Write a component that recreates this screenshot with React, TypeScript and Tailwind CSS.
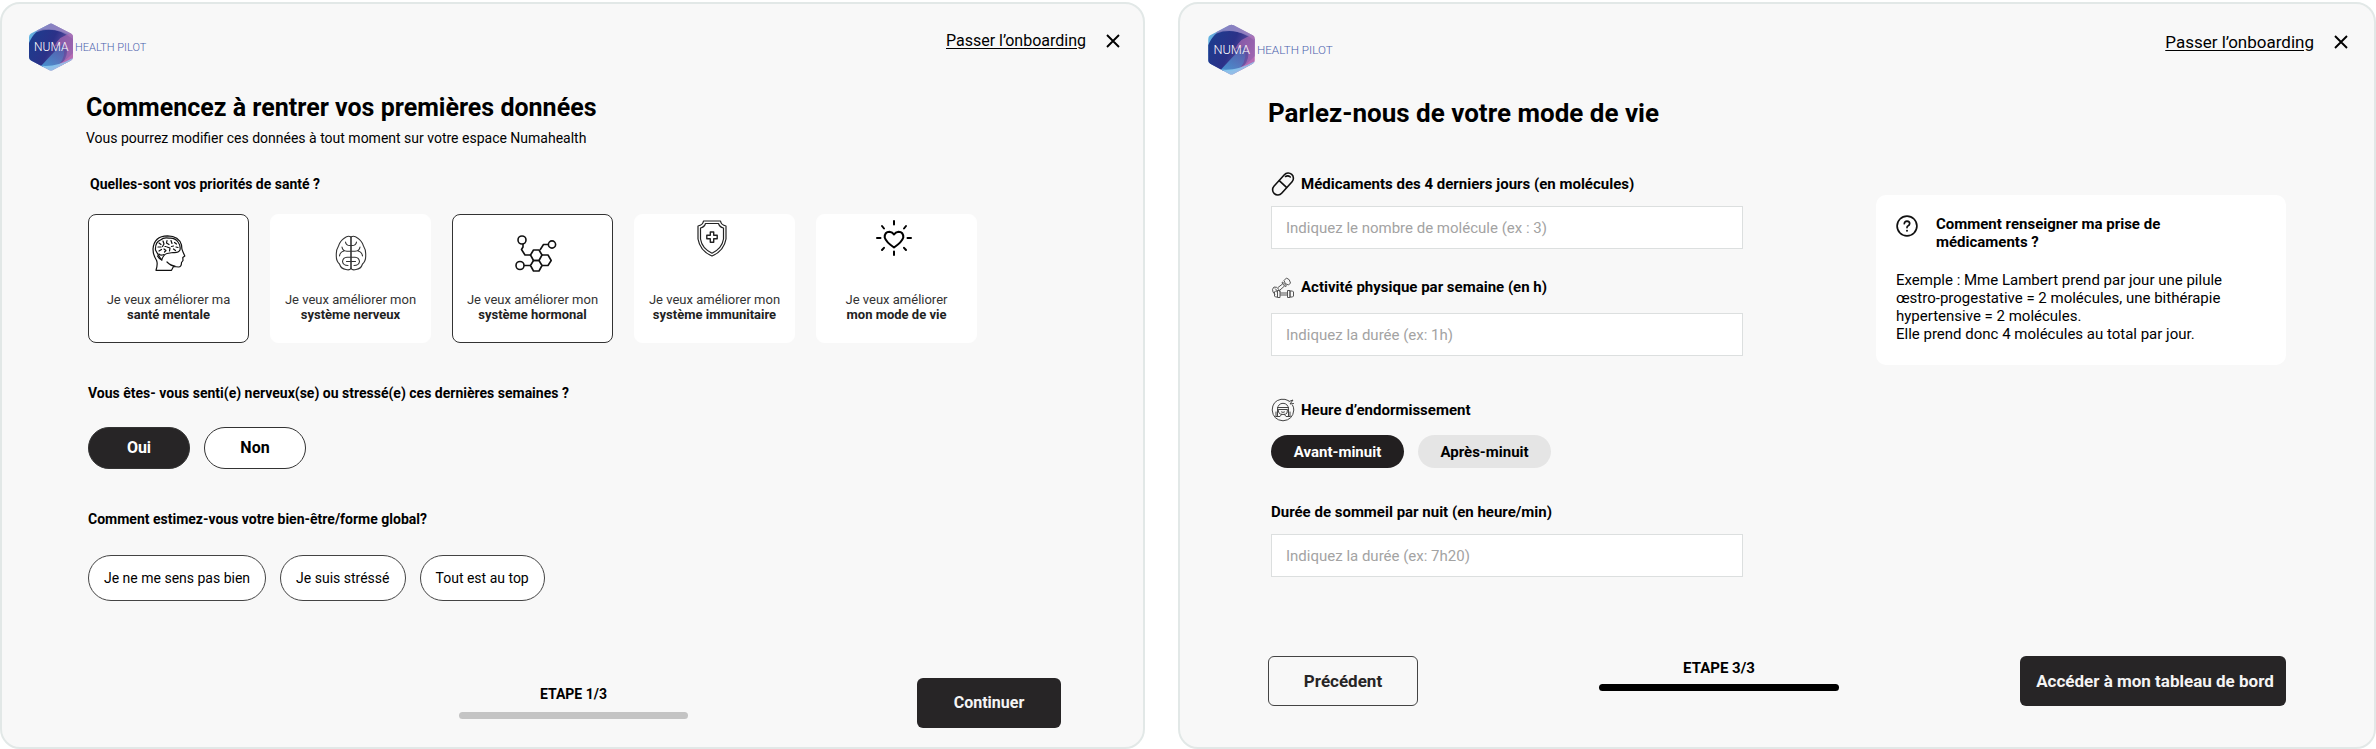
import { useId, useState } from "react";
import type { ReactNode } from "react";

interface Priority {
  id: string;
  intro: string;
  name: string;
  icon: ReactNode;
  raised?: boolean;
}

const PRIORITIES: Priority[] = [
  { id: "mental", intro: "Je veux améliorer ma", name: "santé mentale", icon: <HeadIcon /> },
  { id: "nerveux", intro: "Je veux améliorer mon", name: "système nerveux", icon: <BrainIcon /> },
  { id: "hormonal", intro: "Je veux améliorer mon", name: "système hormonal", icon: <MoleculeIcon /> },
  { id: "immunitaire", intro: "Je veux améliorer mon", name: "système immunitaire", icon: <ShieldIcon />, raised: true },
  { id: "mode", intro: "Je veux améliorer", name: "mon mode de vie", icon: <HeartIcon />, raised: true },
];

const FEELINGS = ["Je ne me sens pas bien", "Je suis stréssé", "Tout est au top"];

function Logo({ className }: { className: string }) {
  const id = useId();
  return (
    <svg viewBox="0 0 125 48" className={className} role="img" aria-label="Numa Health Pilot">
      <defs>
        <linearGradient id={`${id}a`} x1="0" y1="0" x2="1" y2="0.3">
          <stop offset="0" stopColor="#5fc0ea" />
          <stop offset="0.45" stopColor="#6f7fc0" />
          <stop offset="1" stopColor="#c06fb6" />
        </linearGradient>
        <linearGradient id={`${id}b`} x1="0" y1="0.2" x2="1" y2="0.6">
          <stop offset="0" stopColor="#1c3d8f" />
          <stop offset="0.5" stopColor="#2b3188" />
          <stop offset="1" stopColor="#7a5cab" />
        </linearGradient>
        <linearGradient id={`${id}c`} x1="0" y1="1" x2="1" y2="0">
          <stop offset="0" stopColor="#4db4e8" />
          <stop offset="1" stopColor="#5a55a8" />
        </linearGradient>
        <clipPath id={`${id}d`}>
          <path d="M20 1.2Q22 0 24 1.2L42 10.5Q44 11.6 44 14V34Q44 36.4 42 37.5L24 47Q22 48 20 47L2 37.5Q0 36.4 0 34V14Q0 11.6 2 10.5Z" />
        </clipPath>
      </defs>
      <g clipPath={`url(#${id}d)`}>
        <rect width="44" height="48" fill={`url(#${id}a)`} />
        <path d="M0 20Q6 6 16 6Q32 6 44 14V30Q30 46 10 44L0 38Z" fill={`url(#${id}b)`} />
        <path d="M8 9Q26 2 44 16V0H8Z" fill="#8f83c2" opacity="0.75" />
        <path d="M44 10Q30 12 25 24Q34 20 38 28Q38 36 30 44L44 40Z" fill="#b06bb4" opacity="0.65" />
        <path d="M12 43Q22 32 34 20Q38 32 30 42Q20 46 12 43Z" fill={`url(#${id}c)`} opacity="0.75" />
        <path d="M8 42Q24 46 44 35V48H8Z" fill="#8fd0f2" opacity="0.8" />
      </g>
      <text x="5" y="28" fontSize="12" fontWeight="300" fill="#fff" className="font-[Roboto,sans-serif]">NUMA</text>
      <text x="46" y="28" fontSize="11" fontWeight="300" fill="#4a61ad" className="font-[Roboto,sans-serif]">HEALTH PILOT</text>
    </svg>
  );
}

function HeadIcon() {
  return (
    <svg viewBox="0 0 34 36" className="h-9 w-[34px]" fill="none" stroke="#111" strokeWidth="1.2" strokeLinecap="round" strokeLinejoin="round" aria-hidden>
      <path d="M4 35.3Q6 29 4.6 25.5Q1 20 1 14Q2 1 15.500 .8Q27 1 29.500 10Q29.500 14 31 17L32.800 21L30.800 22.500L31 25.500L29.500 27.500Q29.500 32 26.500 32L21.500 31.500L19.500 35.300Z" />
      <path d="M28 15Q26.500 18 21 17.500L15 18.500Q12 19 9.500 25Q5 18 3.500 15Q3 7 8.500 5Q12 1.800 17 3.200Q23 2.600 26 7Q28.800 10.500 28 15Z" />
      <path d="M10 25Q7 24 5.500 21M12 19.500Q8 21 7 19M15 27Q19 31 23 31" />
      <path d="M7 8L9 9.500M6 12H9M7 16L9.500 14.500M11 6L12 9L10.500 11.500M12 14L14 15.500L12.500 17M15 5.500L14.500 8L17 9.500M15 12L18 13L17.500 16M19 5.500L20 8.500M21.500 11L19.500 11.500M22.500 7.500L24.500 9M24 12L26 12.500M21.500 14L23.500 15.500M13 11.500H14" />
    </svg>
  );
}

function BrainIcon() {
  return (
    <svg viewBox="0 0 32 36" className="h-9 w-8" fill="none" stroke="#333" strokeWidth="1.1" strokeLinecap="round" aria-hidden>
      <path d="M16 2Q13 0 9.500 3Q5 6 3.500 11Q1 15 1.300 20Q1 26 4.500 29Q6 34 11 34.500Q14.500 35.500 16 33.500Q17.500 35.500 21 34.500Q26 34 27.500 29Q31 26 30.700 20Q31 15 28.500 11Q27 6 22.500 3Q19 0 16 2Z" />
      <path d="M16 2V33.500" strokeWidth="1.6" />
      <path d="M10.500 7Q11 11 16 10.500Q21 11 21.500 7M7 12Q7.500 16 12 16.300H20Q24.500 16 25 12M4.500 21Q5 17 9 16M27.500 21Q27 17 23 16" />
      <path d="M13 30.500Q8 30.500 7.500 26.500Q8 22.500 12 22.300H20Q24 22.500 24.500 26.500Q24 30.500 19 30.500M11.500 26.500H20.500" />
    </svg>
  );
}

function MoleculeIcon() {
  return (
    <svg viewBox="-6 0 48 37" className="h-[37px] w-12" fill="none" stroke="#111" strokeWidth="1.6" strokeLinejoin="round" aria-hidden>
      <circle cx="7" cy="5" r="4" />
      <circle cx="5" cy="30.500" r="4" />
      <circle cx="37" cy="9.500" r="3.600" />
      <path d="M8 9V12L6.500 14.500L10 20H15.500M9 30.500H15.500M33.500 9.500H28.500L25 15" />
      <path d="M18.500 15H24L27 20L24 25.500H18.500L15.500 20Z" />
      <path d="M18.500 25.500H24L27 30.500L24 36H18.500L15.500 30.500Z" />
      <path d="M27 20H33L36.200 25.500L33 30.500H27" />
    </svg>
  );
}

function ShieldIcon() {
  return (
    <svg viewBox="0 0 36 37" className="h-[37px] w-9" fill="none" stroke="#222" strokeWidth="1.2" strokeLinejoin="round" aria-hidden>
      <path d="M6.500 1H23.500Q24 5 29 6V19Q27 31 15 36Q3 31 1 19V6Q6 5 6.500 1Z" />
      <path d="M8.500 3.500H21.500Q22.500 7 26.500 8V19Q25 28.500 15 33.200Q5 28.500 3.500 19V8Q7.500 7 8.500 3.500Z" />
      <path d="M13.300 12H16.700V15.300H20.200V18.700H16.700V22.200H13.300V18.700H9.800V15.300H13.300Z" strokeWidth="1.400" />
    </svg>
  );
}

function HeartIcon() {
  return (
    <svg viewBox="0 0 42 36" className="h-9 w-[42px]" fill="none" stroke="#000" strokeWidth="2" strokeLinecap="round" strokeLinejoin="round" aria-hidden>
      <path d="M18 27.500Q10 22 8.700 17.500Q8.500 12 13.500 11.800Q16.500 12 18 14.500Q19.500 12 22.500 11.800Q27.500 12 27.300 17.500Q26 22 18 27.500Z" />
      <path d="M18 1V4.500M18 31.500V35M1 18H4.500M31.500 18H35M6 6L8 8.500M30 6L28 8.500M6 30L8 27.800M30 30L28 27.800" />
    </svg>
  );
}

function CapsuleIcon() {
  return (
    <svg viewBox="0 0 24 24" className="size-6" fill="none" stroke="#111" strokeWidth="1.600" strokeLinecap="round" aria-hidden>
      <rect x="-1" y="6.800" width="26" height="10.400" rx="5.200" transform="rotate(-48 12 12)" />
      <path d="M8.500 8.800L15.500 15.300M14.500 4.500Q17 3 19.300 5" />
    </svg>
  );
}

function DumbbellIcon() {
  return (
    <svg viewBox="0 0 24 24" className="size-6" fill="none" stroke="#555" strokeWidth="1" strokeLinejoin="round" aria-hidden>
      <path d="M13 5.500L15.500 3Q19 4 19.500 8L17.500 10Q13.500 9.500 13 5.500ZM11.500 7L15.500 10.800L14 11.500L11 8ZM11.500 9L7 12.500M13.500 11L9 15M3 12Q6 11.500 8 14.500L9 17M3 12Q.5 14 2 17L4 19.500M4 13.500Q6.500 15 6.500 18" />
      <path d="M4.500 16H6.500V22H4.500L3.500 21V17ZM6.500 15.500H9V22.500H6.500ZM9 18H16.500M9 20H16.500M16.500 15.500H19V22.500H16.500ZM19 16H21.500L22.500 17V21L21.500 22H19Z" />
    </svg>
  );
}

function SleepIcon() {
  return (
    <svg viewBox="0 0 24 24" className="size-6" fill="none" stroke="#444" strokeWidth="1" strokeLinecap="round" strokeLinejoin="round" aria-hidden>
      <path d="M17.500 2.600Q14 .7 10 1.300Q1.500 3 1.200 12Q2 22 12 22.800Q22 22 22.800 12Q22.800 9 21.500 7" />
      <path d="M18 3.500L22 2L19 6L22.500 5.500" />
      <path d="M6.500 18V11Q7 5.500 12 5.300Q17 5.500 17.500 11V18M6.500 9.500H17.500M7.500 11.500H16.500L16 15Q15 16.500 12 16.500Q9 16.500 8 15ZM5 18.500H9L10.500 16.500M19 18.500H15L13.500 16.500M10.500 14Q12 15 13.500 14M5 14V18.500M19 14V18.500" />
    </svg>
  );
}

function HelpIcon() {
  return (
    <svg viewBox="0 0 22 22" className="size-[22px] shrink-0" fill="none" stroke="#111" strokeWidth="1.700" strokeLinecap="round" aria-hidden>
      <circle cx="11" cy="11" r="9.900" />
      <path d="M8.300 8.700Q8.500 6.300 11 6.200Q13.700 6.400 13.700 8.700Q13.500 10.200 12.200 10.700Q11 11.300 11 12.600" />
      <path d="M11 15.700V15.800" strokeWidth="2" />
    </svg>
  );
}

function TopBar({ className, logoClassName, linkClassName }: { className: string; logoClassName: string; linkClassName: string }) {
  return (
    <header className={`flex items-start justify-between ${className}`}>
      <Logo className={logoClassName} />
      <div className="flex items-center gap-5 pt-1.5">
        <a href="#passer" className={`leading-6 underline underline-offset-2 ${linkClassName}`}>
          Passer l’onboarding
        </a>
        <button type="button" aria-label="Fermer">
          <svg viewBox="0 0 14 14" className="size-3.5" fill="none" stroke="#000" strokeWidth="1.900" aria-hidden>
            <path d="M1 1L13 13M13 1L1 13" />
          </svg>
        </button>
      </div>
    </header>
  );
}

function StepProgress({ label, className, barClassName }: { label: string; className: string; barClassName: string }) {
  return (
    <div className={`flex flex-col items-center leading-5 font-bold ${className}`}>
      <span>{label}</span>
      <div className={`h-[7px] rounded-sm ${barClassName}`} />
    </div>
  );
}

function Field({ label, placeholder, icon, className }: { label: string; placeholder: string; icon?: ReactNode; className: string }) {
  const id = useId();
  return (
    <div className={`flex flex-col ${className}`}>
      <label htmlFor={id} className="flex h-6 items-center gap-1.5 font-bold">
        {icon}
        {label}
      </label>
      <input
        id={id}
        type="text"
        placeholder={placeholder}
        className="h-[43px] w-full border border-[#dcdfdf] bg-white px-3.5 placeholder:text-[#a3a3a3]"
      />
    </div>
  );
}

function PrioritiesStep() {
  const [selected, setSelected] = useState<string[]>(["mental", "hormonal"]);
  const [stressed, setStressed] = useState(true);
  const [feeling, setFeeling] = useState("");

  const toggle = (id: string) => {
    setSelected((prev) => (prev.includes(id) ? prev.filter((p) => p !== id) : [...prev, id]));
  };

  return (
    <section className="flex flex-col rounded-[20px] border-2 border-[#e2e8e7] bg-[#f8f8f8] text-sm leading-5">
      <TopBar className="pt-[19px] pr-[23px] pl-[27px]" logoClassName="h-12 w-[125px]" linkClassName="text-base" />

      <main className="mt-[21px] flex flex-col px-[84px]">
        <h1 className="text-[25px] leading-8 font-bold">Commencez à rentrer vos premières données</h1>
        <p className="mt-1">Vous pourrez modifier ces données à tout moment sur votre espace Numahealth</p>

        <div className="mt-[26px] flex flex-col gap-10 pl-0.5">
          <div>
            <h2 className="pl-0.5 font-bold">Quelles-sont vos priorités de santé ?</h2>
            <div className="mt-5 flex gap-[21px]">
              {PRIORITIES.map((p) => (
                <button
                  key={p.id}
                  type="button"
                  aria-pressed={selected.includes(p.id)}
                  onClick={() => toggle(p.id)}
                  className={`flex h-[129px] w-[161px] flex-col items-center justify-between rounded-lg border bg-white pb-5 text-[13px] leading-[15px] text-[#333] ${
                    p.raised ? "pt-[5px]" : "pt-5"
                  } ${selected.includes(p.id) ? "border-[#333]" : "border-white"}`}
                >
                  {p.icon}
                  <span>
                    {p.intro}
                    <br />
                    <strong className="font-bold text-[#222]">{p.name}</strong>
                  </span>
                </button>
              ))}
            </div>
          </div>

          <div>
            <h2 className="font-bold">Vous êtes- vous senti(e) nerveux(se) ou stressé(e) ces dernières semaines ?</h2>
            <div className="mt-6 flex gap-3.5 text-base font-bold">
              {[true, false].map((value) => (
                <button
                  key={String(value)}
                  type="button"
                  aria-pressed={stressed === value}
                  onClick={() => setStressed(value)}
                  className={`h-[42px] w-[102px] rounded-full border border-[#333] ${
                    stressed === value ? "bg-[#272526] text-white" : "bg-white"
                  }`}
                >
                  {value ? "Oui" : "Non"}
                </button>
              ))}
            </div>
          </div>

          <div>
            <h2 className="font-bold">Comment estimez-vous votre bien-être/forme global?</h2>
            <div className="mt-[26px] flex gap-3.5">
              {FEELINGS.map((f) => (
                <button
                  key={f}
                  type="button"
                  aria-pressed={feeling === f}
                  onClick={() => setFeeling(f)}
                  className="h-[46px] rounded-full border border-[#444] bg-white px-[15px] aria-pressed:bg-[#272526] aria-pressed:text-white"
                >
                  {f}
                </button>
              ))}
            </div>
          </div>
        </div>
      </main>

      <footer className="mt-auto flex justify-between pr-[82px] pb-[19px] pl-[84px]">
        <div className="w-36" />
        <StepProgress label="ETAPE 1/3" className="gap-2 pt-1.5" barClassName="w-[229px] bg-[#c4c4c4]" />
        <button type="button" className="h-[50px] w-36 rounded-md bg-[#272526] text-base font-bold text-[#f4f4f4]">
          Continuer
        </button>
      </footer>
    </section>
  );
}

function LifestyleStep() {
  const [bedtime, setBedtime] = useState("Avant-minuit");

  return (
    <section className="flex flex-col rounded-[20px] border-2 border-[#e2e8e7] bg-[#f8f8f8] text-[15px] leading-5">
      <TopBar className="pt-5 pr-[26px] pl-7" logoClassName="h-[51px] w-[133px]" linkClassName="text-[17px]" />

      <main className="mt-[22px] px-[88px]">
        <h1 className="text-[26px] leading-8 font-bold">Parlez-nous de votre mode de vie</h1>

        <div className="mt-[43px] flex items-start justify-between pl-[3px]">
          <form className="flex w-[472px] flex-col">
            <Field
              label="Médicaments des 4 derniers jours (en molécules)"
              placeholder="Indiquez le nombre de molécule (ex : 3)"
              icon={<CapsuleIcon />}
              className="gap-2.5"
            />
            <Field
              label="Activité physique par semaine (en h)"
              placeholder="Indiquez la durée (ex: 1h)"
              icon={<DumbbellIcon />}
              className="mt-[26px] gap-3.5"
            />
            <fieldset className="mt-[42px]">
              <legend className="flex h-6 items-center gap-1.5 font-bold">
                <SleepIcon />
                Heure d’endormissement
              </legend>
              <div className="mt-[13px] flex gap-3.5">
                {["Avant-minuit", "Après-minuit"].map((b) => (
                  <button
                    key={b}
                    type="button"
                    aria-pressed={bedtime === b}
                    onClick={() => setBedtime(b)}
                    className={`h-[33px] w-[133px] rounded-full font-bold ${
                      bedtime === b ? "bg-[#221f20] text-white" : "bg-[#e5e5e5]"
                    }`}
                  >
                    {b}
                  </button>
                ))}
              </div>
            </fieldset>
            <Field
              label="Durée de sommeil par nuit (en heure/min)"
              placeholder="Indiquez la durée (ex: 7h20)"
              className="mt-8 gap-2.5"
            />
          </form>

          <aside className="mt-[23px] w-[410px] rounded-[10px] bg-white px-5 pt-5 pb-[22px] leading-[18px]">
            <div className="flex gap-[18px]">
              <HelpIcon />
              <h2 className="font-bold">
                Comment renseigner ma prise de
                <br />
                médicaments ?
              </h2>
            </div>
            <p className="mt-5">
              Exemple : Mme Lambert prend par jour une pilule œstro-progestative = 2 molécules, une bithérapie
              hypertensive = 2 molécules.
              <br />
              Elle prend donc 4 molécules au total par jour.
            </p>
          </aside>
        </div>
      </main>

      <footer className="mt-auto flex justify-between px-[88px] pb-[41px]">
        <button type="button" className="h-[50px] w-[150px] rounded-md border border-[#444] text-[17px] font-bold text-[#272526]">
          Précédent
        </button>
        <StepProgress label="ETAPE 3/3" className="gap-1.5 pt-0.5" barClassName="w-60 bg-black" />
        <button type="button" className="h-[50px] w-[266px] rounded-md bg-[#272526] pl-1 text-[17px] font-bold text-[#f4f4f4]">
          Accéder à mon tableau de bord
        </button>
      </footer>
    </section>
  );
}

export default function App() {
  return (
    <div className="grid min-h-screen grid-cols-[1145fr_1198fr] gap-[33px] bg-white pt-0.5 font-[Roboto,sans-serif] text-black">
      <PrioritiesStep />
      <LifestyleStep />
    </div>
  );
}
